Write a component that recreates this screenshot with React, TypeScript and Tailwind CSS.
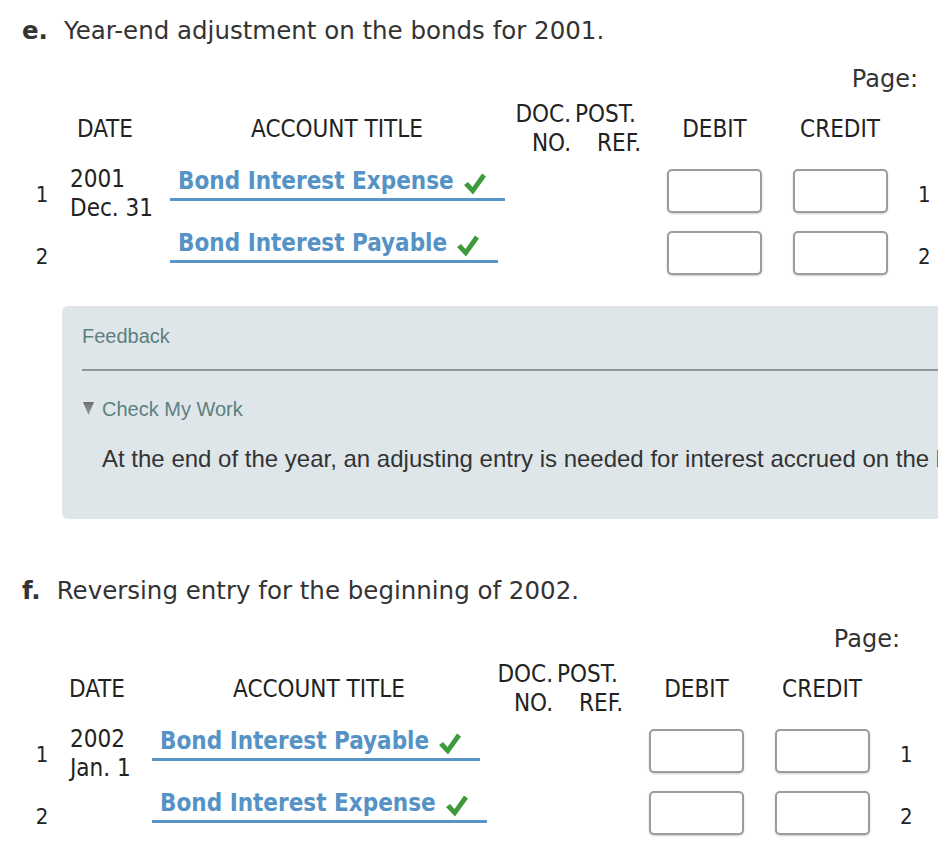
import React from "react";

const COND = "font-['DejaVu_Sans_Condensed','DejaVu_Sans',sans-serif]";

function Check() {
  return (
    <svg width="24" height="24" viewBox="0 0 24 24" className="ml-[9px] mt-[6px] shrink-0">
      <polygon points="1,13 5,10 9.5,15 19,1.5 23,4.5 10,22.5" fill="#3d9b3d" />
    </svg>
  );
}

function Input() {
  return (
    <div className="mt-[4px] h-[44px] w-[95px] rounded-[5px] border-2 border-[#9c9c9c] bg-white shadow-[0_1px_2px_rgba(0,0,0,0.2)]" />
  );
}

type Row = { n: number; date: string[]; account: string };

function Section({
  letter,
  title,
  rows,
  dateCol,
  dateHead,
  pageRow,
}: {
  letter: string;
  title: string;
  rows: Row[];
  dateCol: string;
  dateHead: string;
  pageRow: string;
}) {
  return (
    <div className="pl-[22px]">
      <div className="pt-[16px] text-[24.5px] leading-[30px] text-[#333] font-['DejaVu_Sans',sans-serif] whitespace-nowrap">
        <span className="font-bold">{letter}</span>
        <span className="ml-[16px]">{title}</span>
      </div>
      <div className={`${pageRow} mt-[18px] flex justify-end text-[24px] leading-[30px] text-[#333] font-['DejaVu_Sans',sans-serif]`}>
        Page:
      </div>
      <div className={`mt-[5px] flex h-[60px] items-center text-[24px] leading-[29px] text-[#222] ${COND}`}>
        <div className="w-[40px]" />
        <div className={`${dateCol} ${dateHead}`}>DATE</div>
        <div className="w-[334px] text-center">ACCOUNT TITLE</div>
        <div className="w-[68px] pr-[1px] text-right">
          <div>DOC.</div>
          <div>NO.</div>
        </div>
        <div className="w-[80px] pl-[3px]">
          <div>POST.</div>
          <div className="pl-[22px]">REF.</div>
        </div>
        <div className="w-[125px] text-center">DEBIT</div>
        <div className="w-[126px] text-center">CREDIT</div>
      </div>
      <div className={`mt-[6px] ${COND} text-[#222]`}>
        {rows.map((r) => (
          <div key={r.n} className="flex h-[62px] items-start">
            <div className="mt-[4px] flex h-[44px] w-[40px] items-center justify-center pt-[6px] text-[22px]">
              {r.n}
            </div>
            <div className={`${dateCol} pl-[8px] text-[24px] leading-[29px]`}>
              {r.date.map((d) => (
                <div key={d}>{d}</div>
              ))}
            </div>
            <div className="w-[334px]">
              <div className="inline-flex items-start border-b-[3px] border-[#5b95c6] pb-[2px] pl-[8px] pr-[18px] pt-[1px]">
                <span className="text-[24px] font-bold leading-[30px] text-[#5592c5] whitespace-nowrap">{r.account}</span>
                <Check />
              </div>
            </div>
            <div className="w-[68px]" />
            <div className="w-[80px]" />
            <div className="flex w-[125px] justify-center">
              <Input />
            </div>
            <div className="flex w-[126px] justify-center">
              <Input />
            </div>
            <div className="mt-[4px] flex h-[44px] items-center pl-[15px] pt-[6px] text-[22px]">{r.n}</div>
          </div>
        ))}
      </div>
    </div>
  );
}

function Feedback() {
  return (
    <div className="ml-[62px] mt-[17px] w-[960px] rounded-[6px] bg-[#dfe6e9] pb-[46px] pl-[20px] pt-[18px] font-['Liberation_Sans',Arial,sans-serif]">
      <div className="text-[20px] leading-[24px] text-[#5b8080]">Feedback</div>
      <div className="mt-[21px] h-[2px] bg-[#8f999c]" />
      <div className="mt-[26px] flex items-center text-[20px] leading-[24px] text-[#5b8080]">
        <svg width="11" height="13" viewBox="0 0 11 13" className="ml-[1px] mr-[8px] mt-[-1px]">
          <defs>
            <linearGradient id="tri" x1="0" y1="0" x2="0" y2="1">
              <stop offset="0" stopColor="#6f6f6f" />
              <stop offset="1" stopColor="#a0a0a0" />
            </linearGradient>
          </defs>
          <polygon points="0,0 11,0 5.5,13" fill="url(#tri)" />
        </svg>
        <span>Check My Work</span>
      </div>
      <div className="mt-[24px] whitespace-nowrap pl-[20px] text-[24px] leading-[28px] text-[#333]">
        At the end of the year, an adjusting entry is needed for interest accrued on the bonds.
      </div>
    </div>
  );
}

export default function App() {
  return (
    <div className="h-[844px] w-[938px] overflow-hidden bg-white">
      <Section
        letter="e."
        title="Year-end adjustment on the bonds for 2001."
        rows={[
          { n: 1, date: ["2001", "Dec. 31"], account: "Bond Interest Expense" },
          { n: 2, date: [], account: "Bond Interest Payable" },
        ]}
        dateCol="w-[108px]"
        dateHead="pl-[15px]"
        pageRow="w-[896px]"
      />
      <Feedback />
      <div className="mt-[41px]">
        <Section
          letter="f."
          title="Reversing entry for the beginning of 2002."
          rows={[
            { n: 1, date: ["2002", "Jan. 1"], account: "Bond Interest Payable" },
            { n: 2, date: [], account: "Bond Interest Expense" },
          ]}
          dateCol="w-[90px]"
          dateHead="pl-[7px]"
          pageRow="w-[878px]"
        />
      </div>
    </div>
  );
}
